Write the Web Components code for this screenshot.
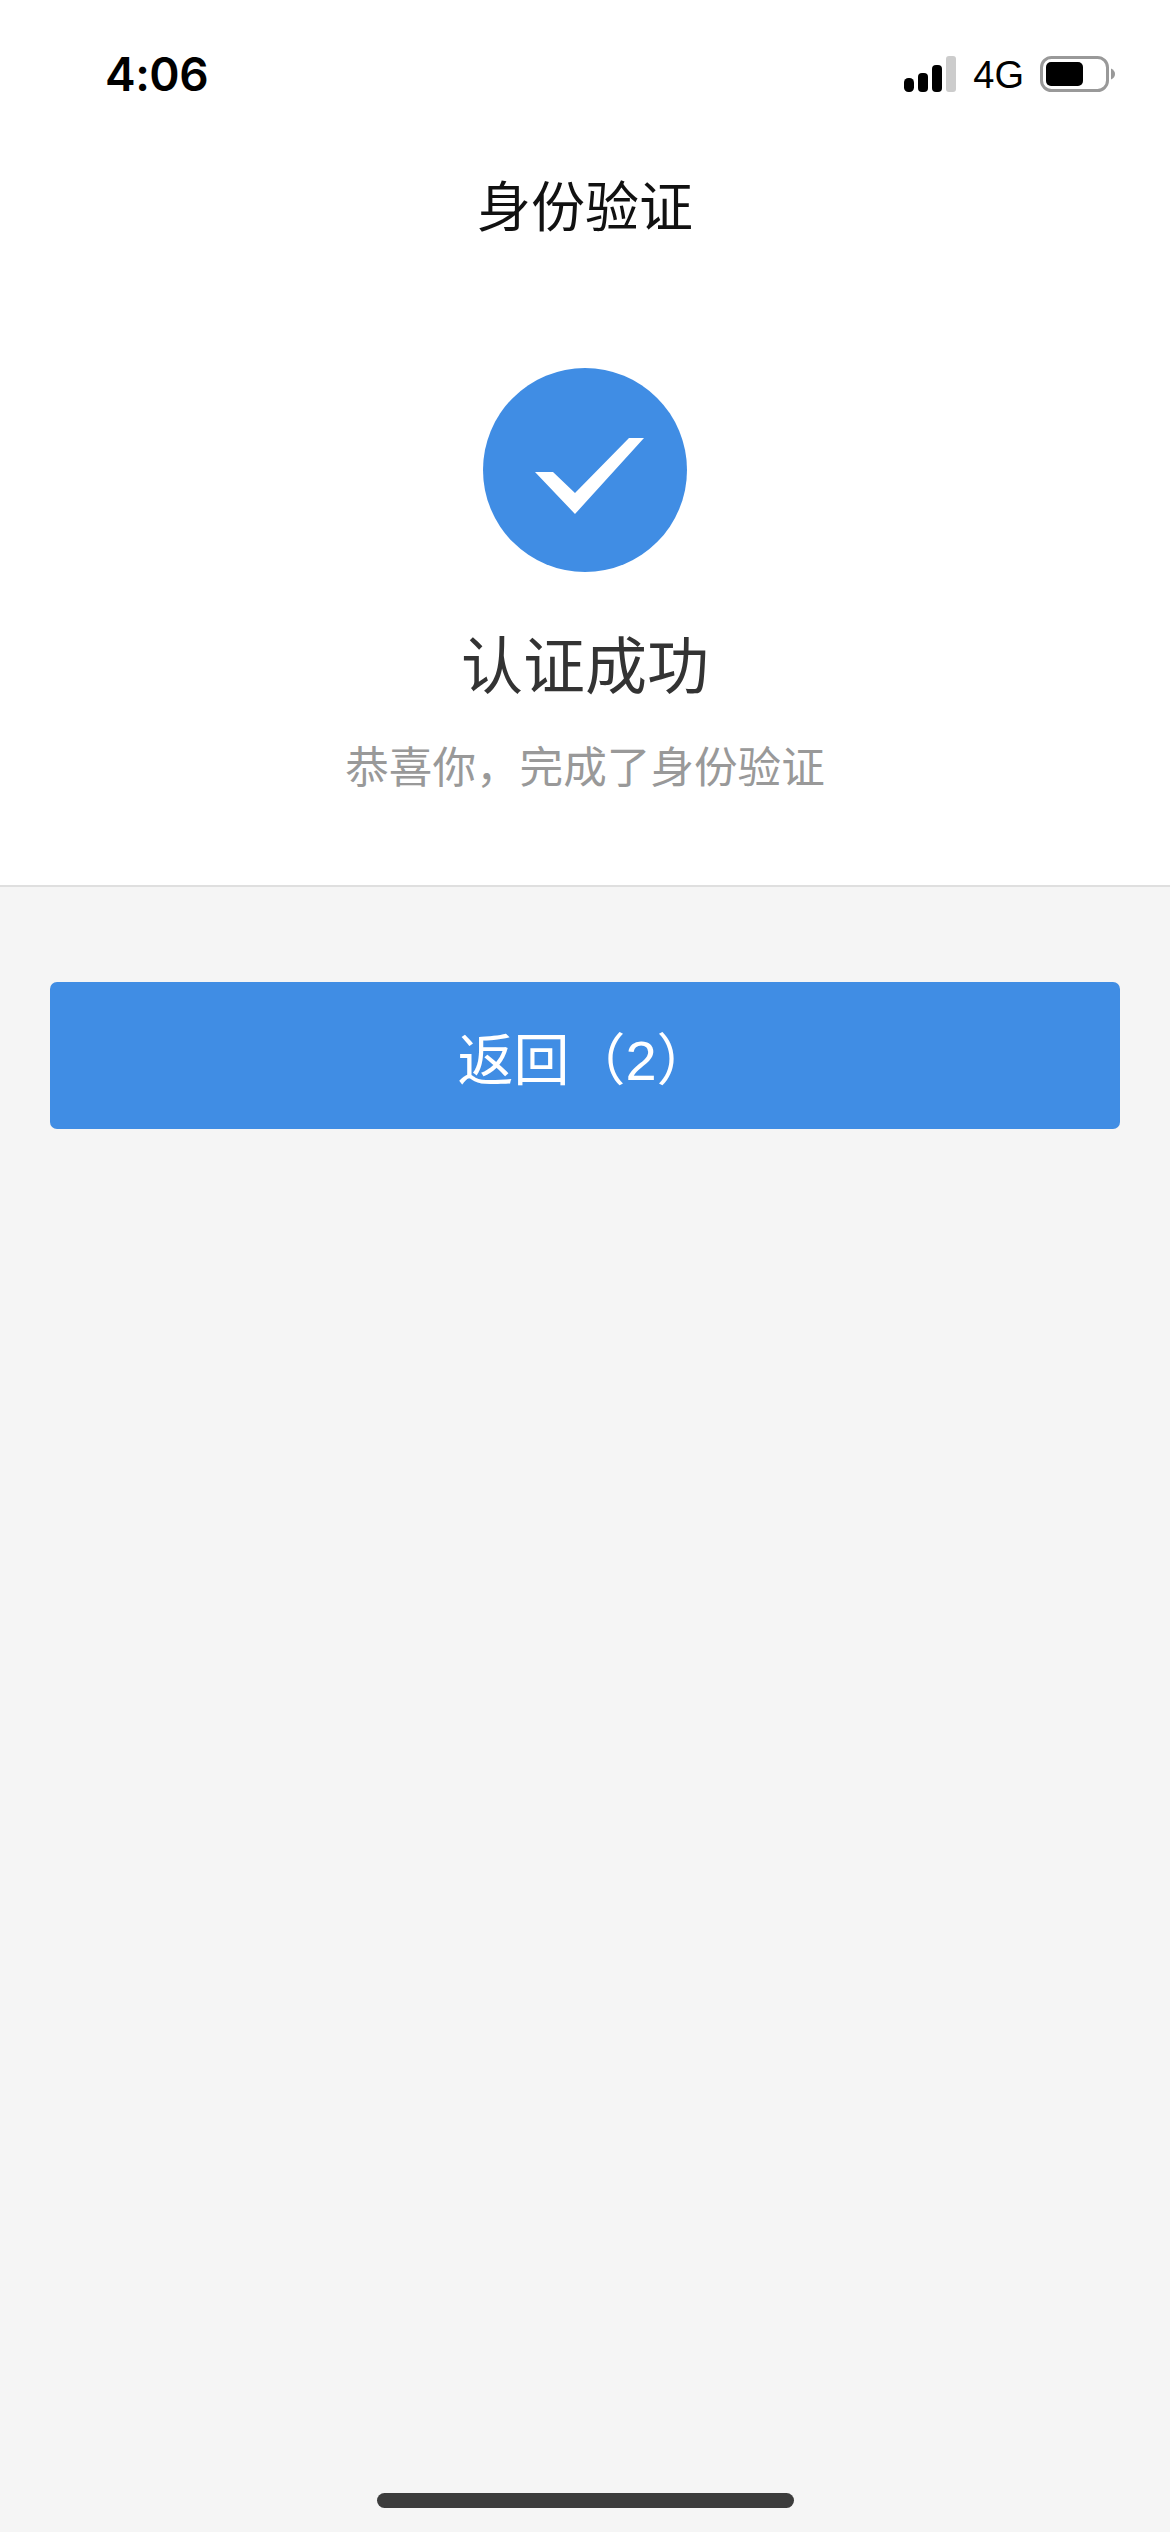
<!DOCTYPE html>
<html lang="zh-CN">
<head>
<meta charset="utf-8">
<title>身份验证</title>
<style>
    html, body { margin: 0; padding: 0; background: #f5f5f5; }
    body { font-family: "Noto Sans CJK SC", "Liberation Sans", sans-serif; }
    verify-page { min-height: 2532px; }
</style>
</head>
<body>
<verify-page>
    <status-bar slot="top" time="4:06" network="4G"></status-bar>
    <nav-title slot="top">身份验证</nav-title>
    <result-panel slot="top" heading="认证成功">恭喜你，完成了身份验证</result-panel>
    <action-button>返回（2）</action-button>
</verify-page>

<script>
class VerifyPage extends HTMLElement {
    constructor() {
        super();
        this.attachShadow({ mode: "open" });
    }

    connectedCallback() {
        this.shadowRoot.innerHTML = `
            <style>
                :host {
                    display: flex;
                    flex-direction: column;
                    background: #f5f5f5;
                }
                .top {
                    background: #fff;
                    border-bottom: 2px solid #dfdfdf;
                }
                .body {
                    padding: 95px 50px 0;
                }
                home-indicator {
                    margin-top: auto;
                }
            </style>
            <div class="top"><slot name="top"></slot></div>
            <div class="body"><slot></slot></div>
            <home-indicator></home-indicator>
        `;
    }
}

class StatusBar extends HTMLElement {
    constructor() {
        super();
        this.attachShadow({ mode: "open" });
    }

    connectedCallback() {
        this.shadowRoot.innerHTML = `
            <style>
                :host {
                    display: flex;
                    align-items: center;
                    justify-content: space-between;
                    height: 148px;
                    padding: 0 54px 0 105px;
                    color: #000;
                    font-family: "Liberation Sans", sans-serif;
                }
                .time {
                    font-family: Inter, "Liberation Sans", sans-serif;
                    font-size: 46px;
                    font-weight: 600;
                    letter-spacing: -0.5px;
                    line-height: 1;
                }
                .right {
                    display: flex;
                    align-items: center;
                }
                .network {
                    font-size: 38px;
                    line-height: 1;
                    margin: 2px 16px 0 17px;
                }
                svg { display: block; }
            </style>
            <span class="time">${this.getAttribute("time")}</span>
            <div class="right">
                <svg width="52" height="36" viewBox="0 0 52 36">
                    <rect x="0" y="22" width="10" height="14" rx="4.5" fill="#000"/>
                    <rect x="14" y="17" width="10" height="19" rx="4" fill="#000"/>
                    <rect x="28" y="9" width="10" height="27" rx="4" fill="#000"/>
                    <rect x="42" y="0" width="10" height="36" rx="3" fill="#ccc"/>
                </svg>
                <span class="network">${this.getAttribute("network")}</span>
                <svg width="76" height="36" viewBox="0 0 76 36">
                    <rect x="1.5" y="1.5" width="66" height="33" rx="10" fill="none" stroke="#999" stroke-width="3"/>
                    <rect x="6" y="6" width="37" height="24" rx="5" fill="#000"/>
                    <path d="M71 12.5 Q75 14.5 75 18 Q75 21.5 71 23.5 Z" fill="#999"/>
                </svg>
            </div>
        `;
    }
}

class NavTitle extends HTMLElement {
    constructor() {
        super();
        this.attachShadow({ mode: "open" });
    }

    connectedCallback() {
        this.shadowRoot.innerHTML = `
            <style>
                :host {
                    display: block;
                    height: 118px;
                    text-align: center;
                    font-size: 54px;
                    line-height: 112px;
                    color: #111;
                }
            </style>
            <slot></slot>
        `;
    }
}

class ResultPanel extends HTMLElement {
    constructor() {
        super();
        this.attachShadow({ mode: "open" });
    }

    connectedCallback() {
        this.shadowRoot.innerHTML = `
            <style>
                :host {
                    display: flex;
                    flex-direction: column;
                    align-items: center;
                    padding: 102px 0 89px;
                }
                .heading {
                    margin-top: 45px;
                    font-size: 62px;
                    line-height: 90px;
                    color: #333;
                }
                .sub {
                    margin-top: 25px;
                    font-size: 43.6px;
                    line-height: 64px;
                    color: #999;
                }
                svg { display: block; }
            </style>
            <svg width="204" height="204" viewBox="0 0 204 204">
                <circle cx="102" cy="102" r="102" fill="#408de4"/>
                <path d="M52 104 L70 104 L92 125 L146 70 L161 70 L92 146 Z" fill="#fff"/>
            </svg>
            <div class="heading">${this.getAttribute("heading")}</div>
            <div class="sub"><slot></slot></div>
        `;
    }
}

class ActionButton extends HTMLElement {
    constructor() {
        super();
        this.attachShadow({ mode: "open" });
    }

    connectedCallback() {
        this.shadowRoot.innerHTML = `
            <style>
                :host {
                    display: flex;
                    align-items: center;
                    justify-content: center;
                    height: 147px;
                    background: #408de4;
                    border-radius: 7px;
                    color: #fff;
                    font-family: "Liberation Sans", "Noto Sans CJK SC", sans-serif;
                    font-size: 56px;
                }
            </style>
            <slot></slot>
        `;
    }
}

class HomeIndicator extends HTMLElement {
    constructor() {
        super();
        this.attachShadow({ mode: "open" });
    }

    connectedCallback() {
        this.shadowRoot.innerHTML = `
            <style>
                :host {
                    display: flex;
                    justify-content: center;
                    padding-bottom: 24px;
                }
                .bar {
                    width: 417px;
                    height: 15px;
                    border-radius: 8px;
                    background: #3c3c3c;
                }
            </style>
            <div class="bar"></div>
        `;
    }
}

customElements.define("status-bar", StatusBar);
customElements.define("nav-title", NavTitle);
customElements.define("result-panel", ResultPanel);
customElements.define("action-button", ActionButton);
customElements.define("home-indicator", HomeIndicator);
customElements.define("verify-page", VerifyPage);
</script>
</body>
</html>
